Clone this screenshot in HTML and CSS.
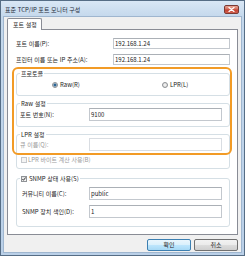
FILE: index.html
```html
<!DOCTYPE html>
<html lang="ko">
<head>
<meta charset="utf-8">
<title>표준 TCP/IP 포트 모니터 구성</title>
<link rel="stylesheet" href="styles.css">
</head>
<body>
<div class="window">
  <div class="titlebar">
    <span class="title">표준 TCP/IP 포트 모니터 구성</span>
    <span class="close"><svg width="7" height="5" viewBox="0 0 7 5"><path d="M1 0.6 L6 4.4 M6 0.6 L1 4.4" stroke="#ffffff" stroke-width="1.3" stroke-linecap="round"/></svg></span>
  </div>
  <div class="client">
    <div class="tabs"><div class="tab">포트 설정</div></div>
    <div class="panel">
      <div class="row top"><span>포트 이름(P):</span><div class="input">192.168.1.24</div></div>
      <div class="row top second"><span>프린터 이름 또는 IP 주소(A):</span><div class="input">192.168.1.24</div></div>

      <fieldset class="group protocol">
        <legend>프로토콜</legend>
        <div class="radios">
          <label class="opt first"><span class="radio on"></span>Raw(R)</label>
          <label class="opt"><span class="radio"></span>LPR(L)</label>
        </div>
      </fieldset>

      <fieldset class="group raw">
        <legend>Raw 설정</legend>
        <div class="gbody">
          <div class="row field"><span>포트 번호(N):</span><div class="input">9100</div></div>
        </div>
      </fieldset>

      <fieldset class="group lpr">
        <legend>LPR 설정</legend>
        <div class="gbody">
          <div class="row field disabled"><span>큐 이름(Q):</span><div class="input"></div></div>
          <label class="check-row disabled"><span class="check"></span>LPR 바이트 계산 사용(B)</label>
        </div>
      </fieldset>

      <fieldset class="group snmp">
        <legend><span class="check on"><svg width="4" height="4" viewBox="0 0 4 4"><path d="M0.4 2 L1.5 3.3 L3.6 0.5" fill="none" stroke="#2a2a2a" stroke-width="0.9"/></svg></span>SNMP 상태 사용(S)</legend>
        <div class="gbody">
          <div class="row field"><span>커뮤니티 이름(C):</span><div class="input">public</div></div>
          <div class="row field second"><span>SNMP 장치 색인(D):</span><div class="input">1</div></div>
        </div>
      </fieldset>

      <div class="highlight"></div>
    </div>
    <div class="buttons">
      <button class="btn default">확인</button>
      <button class="btn">취소</button>
    </div>
  </div>
</div>
</body>
</html>
```
FILE: styles.css
```css
* { box-sizing: border-box; }
html, body { margin: 0; padding: 0; }
body {
  width: 245px;
  height: 256px;
  overflow: hidden;
  font-family: "Noto Sans CJK KR", "Noto Sans", sans-serif;
  font-size: 6px;
  line-height: 7px;
  color: #1b1b1b;
  background: #ffffff;
}

.window {
  width: 245px;
  height: 256px;
  border: 1px solid #566d85;
  padding: 0 2px 2px;
  background: linear-gradient(180deg, #d9e7f5 0, #c4d8ec 16px, #bad0e8 100%);
  display: flex;
  flex-direction: column;
}

.titlebar {
  height: 15px;
  flex: none;
  display: flex;
  justify-content: space-between;
  align-items: flex-start;
}
.title {
  margin: 5px 0 0 2px;
  line-height: 7px;
  color: #1e2b3a;
}
.close {
  margin: 4px 3px 0 0;
  width: 15px;
  height: 9px;
  border: 1px solid #7a3a34;
  border-radius: 2px;
  background: linear-gradient(180deg, #e8a494 0, #d46f5e 45%, #c4402f 55%, #d0614f 100%);
  display: flex;
  align-items: center;
  justify-content: center;
}
.close svg { display: block; }

.client {
  flex: 1;
  background: #f0f0f0;
  border: 1px solid #9fb6cf;
  padding: 1px 3px 0;
  display: flex;
  flex-direction: column;
}

.tabs { display: flex; flex: none; }
.tab {
  position: relative;
  z-index: 1;
  height: 12px;
  margin-bottom: -1px;
  padding: 0 4px 0 5px;
  line-height: 11px;
  background: #ffffff;
  border: 1px solid #898c95;
  border-bottom: none;
  border-radius: 2px 2px 0 0;
}

.panel {
  position: relative;
  flex: none;
  height: 206px;
  background: #ffffff;
  border: 1px solid #898c95;
  padding: 8px 7px 0 8px;
}

.row {
  display: grid;
  align-items: center;
  white-space: nowrap;
}
.row.top {
  grid-template-columns: 1fr 117px;
  height: 11px;
}
.row.top.second { margin-top: 5px; }

.input {
  height: 100%;
  background: #ffffff;
  border: 1px solid #c3c8ce;
  border-top-color: #abb0b6;
  padding: 0 1px;
  display: flex;
  align-items: center;
  color: #1b1b1b;
}

.group {
  margin: 0;
  padding: 0;
  min-width: 0;
  border: 1px solid #d5dfe5;
  border-radius: 3px;
}
.group legend {
  margin-left: 3px;
  padding: 0 1px;
  line-height: 7px;
  height: 7px;
  display: flex;
  align-items: center;
  white-space: nowrap;
}

.protocol { margin-top: 5px; padding: 4px 0 7px; }
.radios { display: flex; padding-left: 35px; height: 7px; }
.opt { display: flex; align-items: center; white-space: nowrap; }
.opt.first { width: 110px; }
.radio {
  width: 6px;
  height: 6px;
  margin-right: 2px;
  border-radius: 50%;
  border: 1px solid #8c8f93;
  background: radial-gradient(circle, #f6f6f6 0, #d6d6d6 100%);
}
.radio.on {
  background: radial-gradient(circle, #1d4f7c 0, #3475a8 1.2px, #d8d8d8 1.9px, #ececec 100%);
}

.gbody { padding: 0 7px 0 3px; }
.row.field {
  grid-template-columns: 1fr 133px;
  height: 13px;
}
.row.field.second { margin-top: 5px; }
.raw { margin-top: 4px; }
.raw .gbody { padding-top: 1px; padding-bottom: 5px; }
.lpr { margin-top: 4px; }
.lpr .gbody { padding-bottom: 5px; }
.snmp { margin-top: 6px; }
.snmp .gbody { padding: 5px 7px 8px 5px; }

.disabled { color: #9a9a9a; }
.disabled .input { border-color: #d9dde2; }

.check-row {
  display: flex;
  align-items: center;
  height: 7px;
  margin-top: 5px;
  padding-left: 1px;
  white-space: nowrap;
}
.check {
  width: 6px;
  height: 6px;
  flex: none;
  margin-right: 1px;
  border: 1px solid #8f9296;
  background: linear-gradient(180deg, #dedede, #fafafa);
  display: flex;
  align-items: center;
  justify-content: center;
}
.check-row.disabled .check {
  border-color: #c5c8cc;
  background: #f4f4f4;
}
.check.on { margin-right: 2px; }
.check svg { display: block; }

.highlight {
  position: absolute;
  top: 37px;
  left: 4px;
  width: 220px;
  height: 88px;
  border: 2px solid #f29b26;
  border-radius: 6px;
  pointer-events: none;
  z-index: 2;
}

.buttons {
  flex: none;
  display: flex;
  justify-content: flex-end;
  gap: 3px;
  padding-top: 4px;
}
.btn {
  width: 44px;
  height: 12px;
  padding: 0;
  margin: 0;
  font: inherit;
  line-height: 10px;
  color: #1b1b1b;
  border: 1px solid #707070;
  border-radius: 2px;
  background: linear-gradient(180deg, #f2f2f2 0, #ebebeb 50%, #dddddd 50%, #cfcfcf 100%);
}
.btn.default {
  border-color: #3c7fb1;
  background: linear-gradient(180deg, #eaf6fd 0, #d9f0fc 50%, #bee6fd 50%, #a7d9f5 100%);
}
```
